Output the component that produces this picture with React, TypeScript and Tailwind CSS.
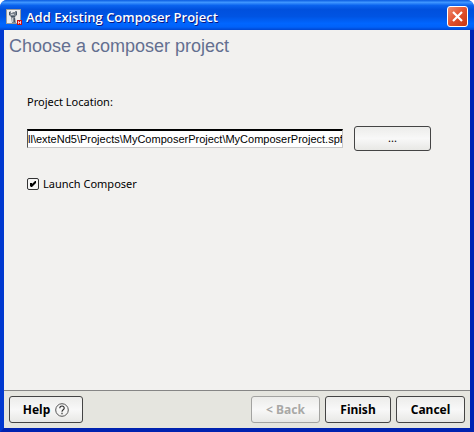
import React, { useState } from 'react';

interface PushButtonProps {
  children?: React.ReactNode;
  className?: string;
  disabled?: boolean;
  label?: string;
}

const PushButton = ({ children, className = '', disabled = false, label }: PushButtonProps) => (
  <button
    type="button"
    disabled={disabled}
    aria-label={label}
    className={`flex items-center justify-center rounded-[3px] border bg-linear-to-b from-[#ececea] via-[#f8f8f8] to-[#e8e8e5] ${disabled ? 'border-[#a3a3a1] text-[#a8a8a6]' : 'border-[#444444] text-black'} ${className}`}
  >
    {children}
  </button>
);

// Wrench with the small red product badge
const AppIcon = () => (
  <svg width="16" height="16" viewBox="0 0 16 16" className="shrink-0" aria-hidden="true">
    <rect x="0.5" y="0.5" width="14" height="14" fill="#eeeeee" stroke="#9a9a9a" />
    <path d="M3 3 5 2v2h1l1-1h2V2h2v4L9 8l1 6H6L5 8 3 6Z" fill="#7d858f" />
    <path d="M3 3h1v3H3zM10 3h1v3h-1zM5 7h4v1H5zM8 9h1v4H8z" fill="#485563" />
    <path d="M5 5h3v1H5zM6 9h1v4H6z" fill="#c4c9cf" />
    <rect x="11" y="11" width="5" height="5" fill="#cf1212" />
    <path d="M12.500 12v3M14.500 12v3M12.500 13.500h2" stroke="#fff" strokeWidth="0.7" />
  </svg>
);

const TitleBar = () => (
  <header className="flex h-[30px] shrink-0 items-center bg-[linear-gradient(to_bottom,#0a5be0_0%,#3f96ff_8%,#0a63ee_18%,#0050dd_32%,#0054e3_55%,#0066ff_78%,#0062fa_90%,#0046d0_100%)] px-[6px] pt-[3px]">
    <AppIcon />
    <h1 className="ml-1 flex-1 font-['Open_Sans',sans-serif] text-[13px] leading-[18px] font-semibold text-white [text-shadow:1px_1px_0_#0a1883]">
      Add Existing Composer Project
    </h1>
    <button
      type="button"
      aria-label="Close"
      className="flex size-[21px] items-center justify-center rounded-[3px] border border-white bg-linear-to-br from-[#ee8a6c] via-[#e2502d] to-[#c63610]"
    >
      <svg width="13" height="13" viewBox="0 0 13 13" aria-hidden="true">
        <path d="M2 2l9 9M11 2l-9 9" stroke="#fff" strokeWidth="2.2" />
      </svg>
    </button>
  </header>
);

const HelpIcon = () => (
  <svg width="14" height="14" viewBox="0 0 14 14" fill="none" className="ml-[5px] shrink-0" aria-hidden="true">
    <circle cx="7" cy="7" r="6.300" stroke="#555" />
    <path d="M4.800 5.200c0-3 4.600-2.800 4.400 0C9.100 6.700 7 6.800 7 8.800M7 9.800v1.400" stroke="#333" strokeWidth="1.200" />
  </svg>
);

export default function App() {
  const [location, setLocation] = useState('ll\\exteNd5\\Projects\\MyComposerProject\\MyComposerProject.spf');
  const [launch, setLaunch] = useState(true);

  return (
    <div className="flex min-h-screen flex-col overflow-hidden rounded-t-[7px] bg-[#0046dc] font-['Noto_Sans',sans-serif] text-[11px] text-black">
      <TitleBar />
      <div className="flex flex-1 flex-col border-x-4 border-b-4 border-[#0038d0] border-r-[#0024b4] border-b-[#0022b0]">
        <main className="flex-1 bg-[#f2f1ef]">
          <h2 className="px-[5px] pt-[5px] font-['Liberation_Sans',sans-serif] text-[18px] leading-[22px] text-[#646f90]">
            Choose a composer project
          </h2>
          <div className="pt-[37px] pr-[39px] pl-[23px]">
            <label htmlFor="location" className="block leading-4">Project Location:</label>
            <div className="mt-4 flex items-center">
              <input
                id="location"
                type="text"
                value={location}
                onChange={(e) => setLocation(e.target.value)}
                className="h-[19px] min-w-0 flex-1 border border-t-2 border-t-black border-r-[#c8c8c8] border-b-[#c8c8c8] border-l-[#555] bg-white font-['Liberation_Sans',sans-serif] text-[11px] outline-none"
              />
              <PushButton label="Browse" className="ml-[11px] h-[25px] w-[77px]">...</PushButton>
            </div>
            <div className="mt-[25px] flex items-center">
              <input
                id="launch"
                type="checkbox"
                checked={launch}
                onChange={(e) => setLaunch(e.target.checked)}
                className="peer size-3 appearance-none rounded-[2px] border border-[#333] bg-[#f6f6f5]"
              />
              <svg width="12" height="12" viewBox="0 0 12 12" className="pointer-events-none invisible -ml-3 peer-checked:visible" aria-hidden="true">
                <path d="M3 5h2v1l3-3h1v2L5 9H4L3 8Z" fill="#000" />
              </svg>
              <label htmlFor="launch" className="ml-1 leading-4">Launch Composer</label>
            </div>
          </div>
        </main>
        <footer className="flex items-center gap-[5px] border-t border-[#858585] bg-[#e5e5df] px-[5px] py-[5px] text-[12px] font-bold">
          <PushButton className="h-[27px] w-[74px]">
            Help
            <HelpIcon />
          </PushButton>
          <PushButton disabled className="ml-auto h-[27px] w-[69px]">&lt; Back</PushButton>
          <PushButton className="h-[27px] w-[66px]">Finish</PushButton>
          <PushButton className="h-[27px] w-[69px]">Cancel</PushButton>
        </footer>
      </div>
    </div>
  );
}
